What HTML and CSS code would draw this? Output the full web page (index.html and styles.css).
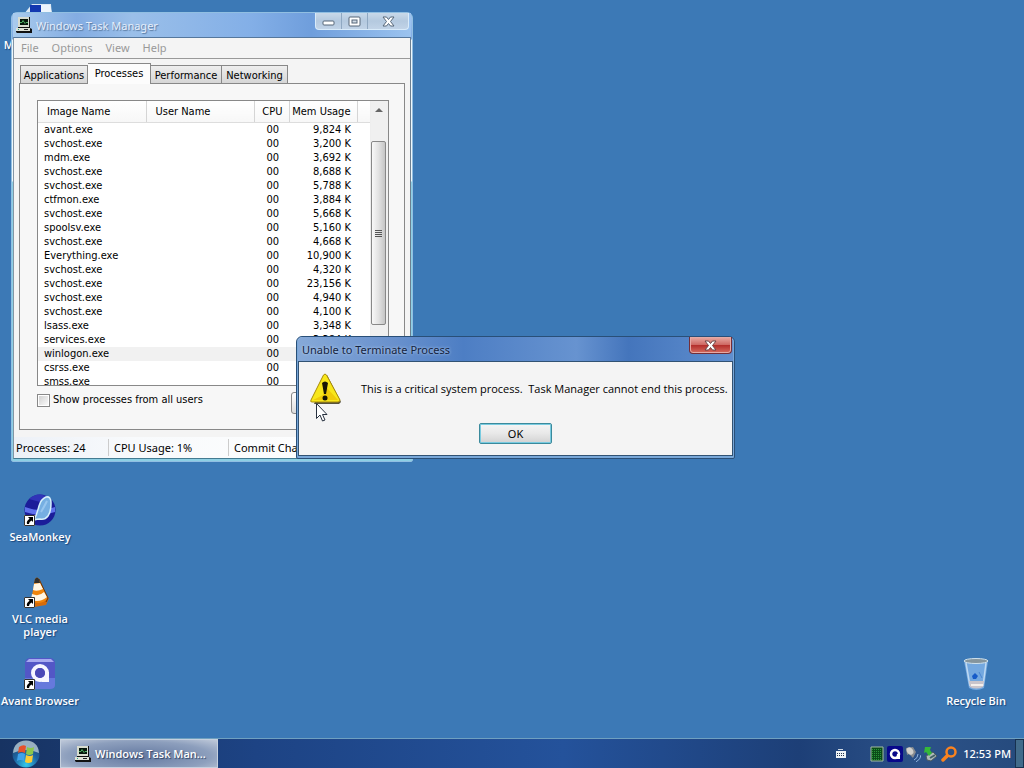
FILE: index.html
```html
<!DOCTYPE html>
<html lang="en">
<head>
<meta charset="utf-8">
<title>Desktop</title>
<link rel="stylesheet" href="styles.css">
</head>
<body>
<svg width="0" height="0" class="defs" aria-hidden="true">
  <defs>
    <symbol id="pc" viewBox="0 0 16 16">
      <path d="M2 0h12v11H2z" fill="#111"/><path d="M2 0h11v10H2z" fill="#d8dccf"/><path d="M4 2h8v6H4z" fill="#06150a"/>
      <path d="M4 5.500h2l1-2 2 3 1-1h2" fill="none" stroke="#4fae62"/>
      <path d="M0 11h14l2 1v4H1l-1-1z" fill="#111"/><path d="M0 11h14v3H0z" fill="#dfe1d6"/><path d="M8 12h4v1H8z" fill="#222"/><path d="M2 12h1v1H2z" fill="#2a8"/>
    </symbol>
    <symbol id="shortcut" viewBox="0 0 11 11">
      <path d="M0 0h11v11H0z" fill="#fff"/><path d="M.5.5h10v10H.5z" fill="none" stroke="#333"/>
      <path d="M4 2h5v5L7.500 5.500Q5 6.500 5 9H3Q2 6 5.600 3.700z" fill="#000"/>
    </symbol>
  </defs>
</svg>
<div class="screen">
  <main class="desktop">
    <a class="shortcut computer" href="#">
      <svg class="icon" viewBox="0 0 32 32"><path d="M0 12L8 2l19 0 1 14H3z" fill="#dce9f5"/><path d="M6 3h13v12H6z" fill="#1238b0"/><path d="M17 3h9l2 8H17z" fill="#edf5fc"/></svg>
      <span>My Computer</span>
    </a>
    <a class="shortcut seamonkey" href="#">
      <svg class="icon" viewBox="0 0 32 32">
        <circle cx="16" cy="16" r="15.500" fill="#1b1d99"/><path d="M1 13Q16 19 31 13v5Q16 23 1 18z" fill="#5f72ec"/><path d="M5 5Q15-4 26 5L16 8z" fill="#3034b8"/>
        <path d="M10 26Q13 20 15 12q2-7 7-9 5-1 5 6 0 9-3 13-3 4-8 3-3 0-6 1z" fill="#76afe2" stroke="#d6f1fb" stroke-width="1.500"/><path d="M17 18Q20 13 23 7" stroke="#98c6ef" stroke-width="2" fill="none"/>
        <use href="#shortcut" x="0" y="21" width="11" height="11"/>
      </svg>
      <span>SeaMonkey</span>
    </a>
    <a class="shortcut vlc" href="#">
      <svg class="icon" viewBox="0 0 32 32">
        <path d="M2 24l9-4 14 2-3 7-12 2z" fill="#d66c0b"/><path d="M11 3q2-3 4 0l9 19q-6 8-17 3z" fill="#ef850d"/>
        <path d="M10 8l6-1 3 6q-6 3-10 1zM8 18q7 3 12-2l3 5q-7 6-16 3z" fill="#fff6e5"/><path d="M15 3l9 19-2 4" fill="none" stroke="#6a330a"/><path d="M11 3q2-3 4 0l1 4h-6z" fill="#33302c"/>
        <use href="#shortcut" x="0" y="21" width="11" height="11"/>
      </svg>
      <span>VLC media player</span>
    </a>
    <a class="shortcut avant" href="#">
      <svg class="icon" viewBox="0 0 32 32">
        <rect x="1" y="0" width="30" height="31" rx="5" fill="#5357c6"/><path d="M5 1h22l3 3H2z" fill="#a7aaf0"/><path d="M1 20h30v7q0 4-5 4H6q-5 0-5-4z" fill="#6679dc"/>
        <circle cx="16" cy="15" r="7" fill="none" stroke="#f6f6ff" stroke-width="4"/><path d="M21 14h4v10h-8l4-4z" fill="#f6f6ff"/><circle cx="16" cy="15" r="5" fill="#4b49b7"/>
        <use href="#shortcut" x="0" y="21" width="11" height="11"/>
      </svg>
      <span>Avant Browser</span>
    </a>
    <a class="shortcut recycle" href="#">
      <svg class="icon" viewBox="0 0 32 32">
        <path d="M4 3h24l-4 27q-8 4-15 0z" fill="#74a8df"/><path d="M6 5l4 23M26 5l-3 23" stroke="#bed9f2" stroke-width="1.500"/><path d="M9 23h15l-1 6q-7 3-13 0z" fill="#c9c4cb"/><path d="M11 27h12" stroke="#f5efec" stroke-width="2"/>
        <path d="M12 18l3-3 3 3-2 3h-3z" fill="#175bc8"/><path d="M19 14l3 6" stroke="#4c87d2"/><ellipse cx="16" cy="3" rx="12" ry="2.500" fill="#85959d" stroke="#d0e2ed"/>
      </svg>
      <span>Recycle Bin</span>
    </a>

    <section class="window manager" aria-label="Windows Task Manager">
      <header class="titlebar">
        <svg class="small-icon"><use href="#pc"/></svg><h1>Windows Task Manager</h1>
        <div class="caption">
          <button aria-label="Minimize"><svg viewBox="0 0 13 11"><rect x="1" y="5" width="11" height="4" rx="1" fill="#fff" stroke="#566678"/></svg></button>
          <button aria-label="Maximize"><svg viewBox="0 0 13 11"><rect x="1" y="1" width="11" height="9" rx="1" fill="#fff" stroke="#566678"/><rect x="4" y="4" width="5" height="3" fill="#d0dbe6" stroke="#566678"/></svg></button>
          <button class="wide" aria-label="Close"><svg viewBox="0 0 13 11"><path d="M1 1h3.500l2 2.500 2-2.500H12L8.500 5.500 12 10H8.500l-2-2.500-2 2.500H1l3.500-4.500z" fill="#fff" stroke="#566678"/></svg></button>
        </div>
      </header>
      <div class="client">
        <nav class="menu"><button>File</button><button>Options</button><button>View</button><button>Help</button></nav>
        <div class="content">
          <div class="tabs" role="tablist"><button role="tab">Applications</button><button role="tab" class="active" aria-selected="true">Processes</button><button role="tab">Performance</button><button role="tab">Networking</button></div>
          <div class="pane">
            <div class="list">
              <div class="rows">
                <table>
                  <colgroup><col class="c-name"><col class="c-user"><col class="c-cpu"><col class="c-mem"><col></colgroup>
                  <thead><tr><th>Image Name</th><th>User Name</th><th class="num">CPU</th><th class="num">Mem Usage</th><th class="rest"></th></tr></thead>
                  <tbody>
                    <tr><td>avant.exe</td><td></td><td>00</td><td>9,824 K</td><td></td></tr>
                    <tr><td>svchost.exe</td><td></td><td>00</td><td>3,200 K</td><td></td></tr>
                    <tr><td>mdm.exe</td><td></td><td>00</td><td>3,692 K</td><td></td></tr>
                    <tr><td>svchost.exe</td><td></td><td>00</td><td>8,688 K</td><td></td></tr>
                    <tr><td>svchost.exe</td><td></td><td>00</td><td>5,788 K</td><td></td></tr>
                    <tr><td>ctfmon.exe</td><td></td><td>00</td><td>3,884 K</td><td></td></tr>
                    <tr><td>svchost.exe</td><td></td><td>00</td><td>5,668 K</td><td></td></tr>
                    <tr><td>spoolsv.exe</td><td></td><td>00</td><td>5,160 K</td><td></td></tr>
                    <tr><td>svchost.exe</td><td></td><td>00</td><td>4,668 K</td><td></td></tr>
                    <tr><td>Everything.exe</td><td></td><td>00</td><td>10,900 K</td><td></td></tr>
                    <tr><td>svchost.exe</td><td></td><td>00</td><td>4,320 K</td><td></td></tr>
                    <tr><td>svchost.exe</td><td></td><td>00</td><td>23,156 K</td><td></td></tr>
                    <tr><td>svchost.exe</td><td></td><td>00</td><td>4,940 K</td><td></td></tr>
                    <tr><td>svchost.exe</td><td></td><td>00</td><td>4,100 K</td><td></td></tr>
                    <tr><td>lsass.exe</td><td></td><td>00</td><td>3,348 K</td><td></td></tr>
                    <tr><td>services.exe</td><td></td><td>00</td><td>3,384 K</td><td></td></tr>
                    <tr class="selected"><td>winlogon.exe</td><td></td><td>00</td><td></td><td></td></tr>
                    <tr><td>csrss.exe</td><td></td><td>00</td><td></td><td></td></tr>
                    <tr><td>smss.exe</td><td></td><td>00</td><td></td><td></td></tr>
                  </tbody>
                </table>
              </div>
              <div class="scrollbar"><svg viewBox="0 0 8 4"><path d="M4 0l4 4H0z" fill="#666"/></svg><div class="thumb"><i></i><i></i><i></i><i></i></div></div>
            </div>
            <div class="actions"><label><input type="checkbox">Show processes from all users</label><button class="end">End Process</button></div>
          </div>
        </div>
        <footer class="status"><span>Processes: 24</span><span>CPU Usage: 1%</span><span>Commit Charge</span></footer>
      </div>
    </section>

    <section class="window dialog" role="dialog" aria-label="Unable to Terminate Process">
      <header class="titlebar"><h2>Unable to Terminate Process</h2>
        <button class="close" aria-label="Close"><svg viewBox="0 0 13 11"><path d="M1 1h3.500l2 2.500 2-2.500H12L8.500 5.500 12 10H8.500l-2-2.500-2 2.500H1l3.500-4.500z" fill="#fff" stroke="#6b4545"/></svg></button>
      </header>
      <div class="client">
        <div class="message">
          <svg class="warning" viewBox="0 0 32 32"><path d="M17 2l14 27-2 2H4z" fill="#30290c" opacity=".8"/><path d="M13.500 2q1.500-2 3 0L30 27q0 2-2 2H2q-2 0-1-2z" fill="#f8e71b" stroke="#a88b08"/><path d="M16 14l12 13H3l10-5z" fill="#f0cb09"/><path d="M12 10q3-3 6 0l-2 11h-2z" fill="#171505"/><circle cx="15" cy="25" r="2.500" fill="#171505"/></svg>
          <p>This is a critical system process.&nbsp; Task Manager cannot end this process.</p>
        </div>
        <button class="ok">OK</button>
      </div>
    </section>
    <svg class="cursor" viewBox="0 0 12 19"><path d="M.5.5v15L4 12l2.500 6 2.500-1-2.500-5.500H11z" fill="#fff" stroke="#27313f"/></svg>
  </main>

  <footer class="taskbar">
    <button class="start" aria-label="Start"><svg viewBox="0 0 28 28">
      <defs><radialGradient id="orb" cx=".5" cy=".9" r=".9"><stop offset="0" stop-color="#35c9ec"/><stop offset=".5" stop-color="#1d65a3"/><stop offset="1" stop-color="#234064"/></radialGradient></defs>
      <circle cx="14" cy="14" r="13.500" fill="url(#orb)"/><path d="M1 13Q2 1 14 .5 26 1 27 13 14 7 1 13z" fill="#b6c9d4" opacity=".8"/>
      <path d="M7 7q4-3 7-1l-1 7q-4-2-7 0z" fill="#e6512a"/><path d="M15 7q4 2 7 0l-1 7q-4 2-7 0z" fill="#8bc84b"/><path d="M6 14q4-2 7 0l-1 7q-4-2-7 0z" fill="#3fa2ea"/><path d="M14 15q4 2 7 0l-1 7q-4 2-7 0z" fill="#fbcb35"/></svg></button>
    <button class="task"><svg class="small-icon"><use href="#pc"/></svg>Windows Task Man...</button>
    <div class="tray">
      <svg class="keyboard" viewBox="0 0 10 9"><path d="M0 2h10v7H0z" fill="#eef3f7"/><path d="M1 4.500h8M1 6.500h8" stroke="#24344a" stroke-dasharray="1 1"/><path d="M2 .5h5" fill="none" stroke="#cbd6e2"/></svg>
      <svg viewBox="0 0 16 16"><path d="M2 1h12v14H2z" fill="#0b4b19" stroke="#a4bda3"/><path d="M3 3.500h10M3 5.500h10M3 7.500h10M3 9.500h10M3 11.500h10M3 13.500h10" stroke="#299438" stroke-dasharray="1 1"/></svg>
      <svg viewBox="0 0 16 16"><rect width="16" height="16" rx="2" fill="#08088a"/><circle cx="8" cy="8" r="4" fill="none" stroke="#fff" stroke-width="2.500"/><path d="M10 8h3v5h-4z" fill="#fff"/></svg>
      <svg viewBox="0 0 16 16"><path d="M1 2l7-1 3 5-3 6-4-4-2 1z" fill="#888c90"/><ellipse cx="5" cy="5" rx="3" ry="4" fill="#d2d0cb" transform="rotate(-35 5 5)"/><path d="M9 14q4-2 4-6M11 16q5-3 5-7" fill="none" stroke="#92b4df"/></svg>
      <svg viewBox="0 0 16 16"><path d="M3 10l7-4 4 4-6 5-4-1z" fill="#aebaba" stroke="#4b5960"/><path d="M2 1l6 0-1 3 2 3-3 3-3-4-2 1z" fill="#35b839"/><path d="M7 12l5-3" stroke="#435f66" stroke-width="2"/></svg>
      <svg viewBox="0 0 16 16"><circle cx="10" cy="6" r="4.500" fill="none" stroke="#fa831f" stroke-width="2.500"/><path d="M6 10l-4 4" stroke="#fa831f" stroke-width="3.500" stroke-linecap="round"/></svg>
      <time>12:53 PM</time>
    </div>
    <button class="show" aria-label="Show desktop"></button>
  </footer>
</div>
</body>
</html>
```
FILE: styles.css
```css
* { box-sizing: border-box; }
body { margin: 0; font: 11px/14px "DejaVu Sans Condensed", "DejaVu Sans", sans-serif; color: #000; }
button { font: inherit; color: inherit; padding: 0; border: 0; background: none; }
h1, h2, p { margin: 0; font-size: inherit; font-weight: 400; }
.defs { position: absolute; }
.screen { height: 100vh; display: flex; flex-direction: column; overflow: hidden; background: #3c79b6; }
.desktop { flex: 1; position: relative; min-height: 0; }

.shortcut { position: absolute; width: 80px; display: flex; flex-direction: column; align-items: center; gap: 4px; color: #fff; text-align: center; text-decoration: none; font: 600 11px/13px "Open Sans", "Noto Sans", sans-serif; text-shadow: 1px 1px 1px #1c467a; }
.icon { width: 32px; height: 32px; }
.shortcut span { max-width: 80px; }
.vlc span { max-width: 64px; }
.computer { left: 0; top: 2px; }
.seamonkey { left: 0; top: 494px; }
.vlc { left: 0; top: 576px; }
.avant { left: 0; top: 658px; }
.recycle { right: 8px; top: 658px; }

.window { position: absolute; display: flex; flex-direction: column; border-radius: 6px 6px 2px 2px; }
.titlebar { display: flex; align-items: flex-start; font-family: "Noto Sans", sans-serif; }
.client { flex: 1; display: flex; flex-direction: column; background: #f4f4f4; }
.small-icon { width: 16px; height: 16px; flex: none; }

.manager { left: 11px; top: 12px; width: 402px; height: 450px; padding: 0 1px 2px; border: 1px solid #91bfe2; background: linear-gradient(#a2c5ee, #7eaae4 26px, #eef7fc 27px, #eef7fc 168px, #8dcfe4 169px); }
.manager .titlebar { height: 24px; padding: 0 2px 0 3px; gap: 4px; background: linear-gradient(90deg, #a9cbed, #83ace2 16%, #9abfe9 30%, #83afe7 60%, #6f9edc 75%, #9bc3ef); color: #e5eefb; text-shadow: 1px 1px 1px #57779e; }
.manager .small-icon { margin-top: 4px; }
.manager h1 { flex: 1; margin-top: 6px; }
.manager .client { border-top: 1px solid #55779c; border-left: 1px solid #8395a5; border-right: 1px solid #6c7f90; border-bottom: 1px solid #447b91; }
.caption { display: flex; height: 17px; border: 1px solid #d9ebfa; border-top: 0; border-radius: 0 0 4px 4px; overflow: hidden; background: linear-gradient(#c9d9e9, #b4c9df 50%, #c1d3e7); }
.caption button { width: 25px; display: flex; justify-content: center; align-items: center; }
.caption button + button { width: 26px; border-left: 1px solid #8fa8c2; }
.caption .wide.wide { width: 41px; }
.caption svg, .close svg { width: 13px; height: 11px; }
.menu { height: 21px; display: flex; gap: 13px; padding: 0 7px; border-bottom: 1px solid #999; color: #999; font-family: "Noto Sans", sans-serif; }
.content { flex: 1; display: flex; flex-direction: column; padding: 4px 5px 7px; }
.tabs { display: flex; align-items: flex-end; height: 21px; padding-left: 1px; margin-bottom: -1px; }
.tabs button { height: 19px; flex: 0 0 66px; padding-top: 2px; border: 1px solid #888; border-left: 0; background: linear-gradient(#eee, #d6d6d6); white-space: nowrap; }
.tabs button:first-child { border-left: 1px solid #888; flex-basis: 68px; }
.tabs button:nth-child(3) { flex-basis: 71px; }
.tabs .active { height: 21px; flex-basis: 63px; padding: 0; background: #fcfcfc; border-bottom: 0; z-index: 1; }
.pane { flex: 1; display: flex; flex-direction: column; padding: 16px 15px 0 17px; border: 1px solid #888; background: #f7f7f7; }
.list { height: 286px; display: flex; border: 1px solid #888; background: #fff; overflow: hidden; }
.rows { flex: 1; min-width: 0; overflow: hidden; }
table { width: 100%; table-layout: fixed; border-collapse: collapse; }
.c-name, .c-user { width: 108px; }
.c-cpu { width: 35px; }
.c-mem { width: 68px; }
th { height: 21px; padding: 2px 6px 0 9px; border-right: 1px solid #d5d5d5; border-bottom: 1px solid #ddd; background: linear-gradient(#fff, #f7f7f7); text-align: left; font-weight: 400; white-space: nowrap; }
th.rest { border-right: 0; }
th.num { padding: 2px 6px 0 0; text-align: right; }
td { height: 14px; padding: 0 6px; line-height: 14px; white-space: nowrap; }
td:nth-child(3) { text-align: right; padding-right: 10px; }
td:nth-child(4) { text-align: right; padding-left: 0; }
.selected { background: #f1f1f1; }
.scrollbar { width: 18px; display: flex; flex-direction: column; align-items: center; padding: 7px 2px 60px 0; border-left: 1px solid #eee; background: #f0f0f0; }
.scrollbar svg { width: 8px; height: 4px; flex: none; }
.thumb { flex: 1; width: 15px; margin-top: 29px; display: flex; flex-direction: column; align-items: center; justify-content: center; gap: 1px; border: 1px solid #888; border-radius: 2px; background: linear-gradient(90deg, #f8f8f8, #e2e2e2 50%, #c5c5c5); }
.thumb i { width: 7px; height: 1px; background: #555; }
.actions { display: flex; justify-content: space-between; padding-top: 6px; }
.actions label { display: flex; align-items: center; gap: 3px; height: 16px; }
.actions input { appearance: none; width: 13px; height: 13px; margin: 0; border: 1px solid #888; background: linear-gradient(135deg, #ccc, #fff); box-shadow: inset 0 0 0 1px #fff; }
.end { width: 98px; height: 22px; border: 1px solid #888; border-radius: 3px; background: linear-gradient(#fff, #ddd); }
.status { height: 21px; display: flex; align-items: center; background: linear-gradient(90deg, #edf1f7, #f8fafc 30%, #fff); font-family: "Noto Sans", sans-serif; line-height: 17px; white-space: nowrap; }
.status span { width: 120px; padding-left: 5px; border-right: 1px solid #ccc; }
.status span:first-child { width: 95px; padding-left: 2px; }

.dialog { left: 296px; top: 336px; width: 439px; height: 123px; padding: 0 1px 2px 1px; border: 1px solid #294f78; background: #78a7d8; box-shadow: inset 0 1px #a8c9f0; }
.dialog .titlebar { height: 24px; justify-content: space-between; padding: 0 1px 0 4px; border-radius: 5px 5px 0 0; background: linear-gradient(90deg, #86a9d8, #6991cd 22%, #4d7ec4 38%, #6793d0 64%, #4475bc 76%, #608fcf); }
.dialog h2 { margin-top: 6px; color: #14233e; text-shadow: 0 0 3px #c9def5; }
.close { width: 43px; height: 17px; display: flex; align-items: center; justify-content: center; border: 1px solid #742e38; border-top: 0; border-radius: 0 0 4px 4px; background: linear-gradient(#e9aba4, #ce6963 48%, #b22c29 50%, #d66c60); box-shadow: inset 0 0 0 1px #e5aaa5; }
.dialog .client { border: 1px solid #315273; align-items: center; }
.message { align-self: stretch; display: flex; gap: 19px; padding: 11px 4px 0 11px; }
.warning { width: 32px; height: 32px; flex: none; }
.message p { padding-top: 9px; font-family: "Open Sans", sans-serif; white-space: nowrap; }
.ok { width: 73px; height: 21px; margin-top: 18px; border: 1px solid #3b8a9c; border-radius: 2px; background: linear-gradient(#f5f5f5, #e8e8e8 50%, #d2d2d2); box-shadow: inset 0 0 0 1px #79cbe0; font-family: "Noto Sans", sans-serif; }
.cursor { position: absolute; left: 316px; top: 403px; width: 12px; height: 19px; }

.taskbar { flex: none; height: 30px; display: flex; align-items: stretch; border-top: 1px solid #6fa0c0; background: linear-gradient(90deg, #173362, #1d4384 25%, #24529b 55%, #1d3f77 78%, #2c5288 90%, #254a7d); color: #fff; }
.start { width: 52px; display: flex; align-items: center; justify-content: center; }
.start svg { width: 28px; height: 28px; }
.task { width: 158px; margin-left: 8px; padding-left: 14px; display: flex; align-items: center; gap: 4px; border: 1px solid #c5d0de; background: radial-gradient(ellipse at 50% 60%, #6378a0, #8d9fbd 65%, #c0cada); font: 600 11px "Open Sans", sans-serif; text-shadow: 1px 1px 1px #304567; }
.tray { margin-left: auto; display: flex; align-items: center; gap: 2px; padding-right: 4px; }
.tray svg { width: 16px; height: 16px; flex: none; }
.tray .keyboard { width: 10px; height: 9px; margin-right: 21px; }
.tray time { margin-left: 4px; font: 500 11px "Noto Sans", sans-serif; }
.show { width: 9px; border: 1px solid #17314f; background: #416b8b; }
```
